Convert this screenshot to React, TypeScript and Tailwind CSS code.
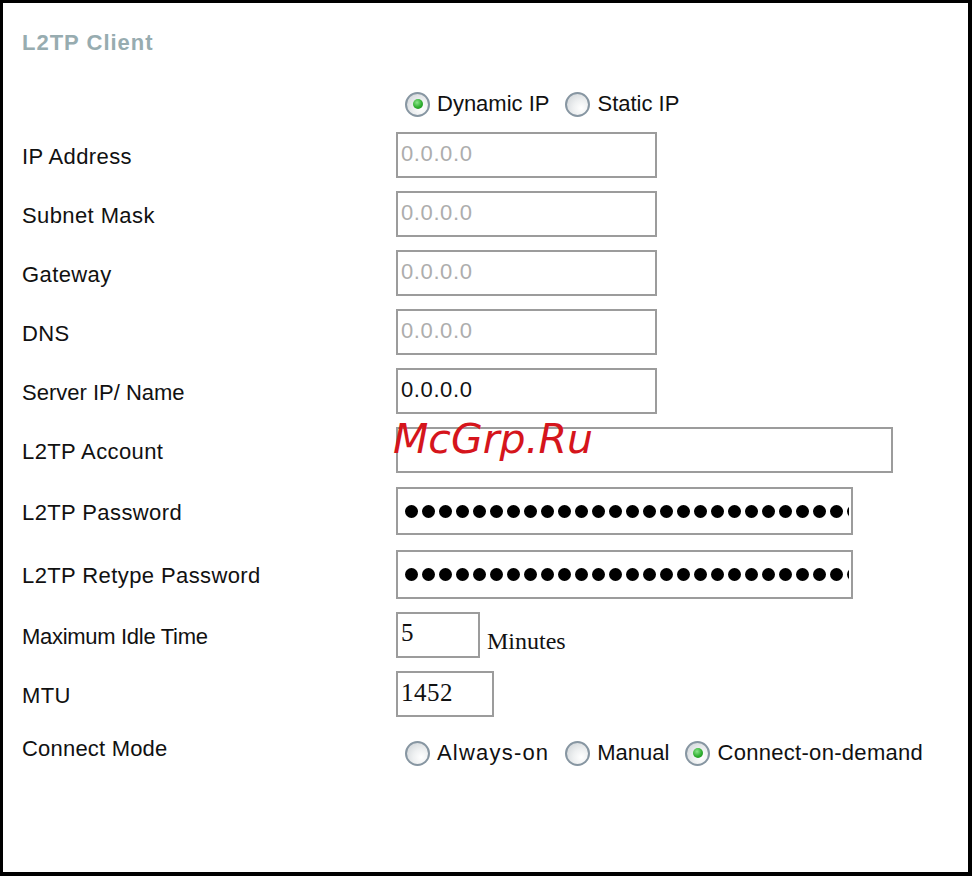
import React from 'react';

const sans = "font-['Liberation_Sans',Arial,sans-serif]";
const serif = "font-['Liberation_Serif','Times_New_Roman',serif]";

function Radio({ checked = false }: { checked?: boolean }) {
  return (
    <span className="flex h-[25px] w-[25px] shrink-0 items-center justify-center rounded-full border-2 border-[#8796a2] bg-[radial-gradient(circle_at_68%_68%,#ffffff_0%,#eef0f1_40%,#cbd0d4_100%)]">
      {checked && (
        <span className="h-[10px] w-[10px] rounded-full bg-[radial-gradient(circle_at_40%_35%,#8be58b_0%,#2fae2f_55%,#18871a_100%)]" />
      )}
    </span>
  );
}

function RadioOption({ label, checked, className = '' }: { label: string; checked?: boolean; className?: string }) {
  return (
    <label className="flex items-center gap-[7px]">
      <Radio checked={checked} />
      <span className={`text-[22px] leading-[26px] text-[#111] ${className}`}>{label}</span>
    </label>
  );
}

function Row({
  label,
  className,
  labelClass = 'tracking-[0.4px]',
  children,
}: {
  label: string;
  className: string;
  labelClass?: string;
  children: React.ReactNode;
}) {
  return (
    <div className={`flex items-center ${className}`}>
      <div className={`w-[374px] shrink-0 pt-[3px] text-[22px] leading-[26px] text-[#111] ${labelClass}`}>{label}</div>
      {children}
    </div>
  );
}

function TextBox({ value, width, muted }: { value: string; width: string; muted?: boolean }) {
  return (
    <div
      className={`flex h-full ${width} items-center border-2 border-[#9c9c9c] bg-white pl-[3px] pb-[3px] text-[22px] tracking-[0.6px] ${
        muted ? 'text-[#adadad]' : 'text-[#111]'
      }`}
    >
      {value}
    </div>
  );
}

function PasswordBox() {
  return (
    <div className="flex h-full w-[457px] items-center border-2 border-[#9c9c9c] bg-white pl-[7px] pr-[2px]">
      <div className="flex gap-[4px] overflow-hidden">
        {Array.from({ length: 28 }).map((_, i) => (
          <span key={i} className="h-[13px] w-[13px] shrink-0 rounded-full bg-black" />
        ))}
      </div>
    </div>
  );
}

export default function App() {
  const ipRows = [
    { label: 'IP Address', mt: 'mt-[15px]' },
    { label: 'Subnet Mask', mt: 'mt-[13px]' },
    { label: 'Gateway', mt: 'mt-[13px]' },
    { label: 'DNS', mt: 'mt-[13px]' },
  ];

  return (
    <div className={`relative h-[876px] w-[972px] border-t-[3px] border-r-[4px] border-b-[4px] border-l-[3px] border-black bg-white ${sans}`}>
      <div className="pl-[19px] pt-[27px]">
        {/* Title */}
        <h1 className="text-[22px] font-bold leading-[26px] tracking-[1px] text-[#97acb0]">L2TP Client</h1>

        {/* Address type */}
        <div className="mt-[35px] flex h-[26px] items-center gap-[16px] pl-[383px]">
          <RadioOption label="Dynamic IP" checked />
          <RadioOption label="Static IP" />
        </div>

        {ipRows.map((row) => (
          <Row key={row.label} label={row.label} className={`h-[46px] ${row.mt}`}>
            <TextBox value="0.0.0.0" width="w-[261px]" muted />
          </Row>
        ))}

        <Row label="Server IP/ Name" labelClass="tracking-[0px]" className="mt-[13px] h-[46px]">
          <TextBox value="0.0.0.0" width="w-[261px]" />
        </Row>

        <Row label="L2TP Account" className="mt-[13px] h-[46px]">
          <TextBox value="" width="w-[497px]" />
        </Row>

        <Row label="L2TP Password" className="mt-[14px] h-[48px]">
          <PasswordBox />
        </Row>

        <Row label="L2TP Retype Password" className="mt-[15px] h-[49px]">
          <PasswordBox />
        </Row>

        <Row label="Maximum Idle Time" labelClass="tracking-[-0.3px]" className="mt-[13px] h-[46px]">
          <div className={`flex h-full w-[84px] items-center border-2 border-[#9c9c9c] bg-white pl-[3px] pb-[4px] text-[25px] text-[#111] ${serif}`}>
            5
          </div>
          <span className={`ml-[7px] mt-[12px] text-[24px] text-[#111] ${serif}`}>Minutes</span>
        </Row>

        <Row label="MTU" className="mt-[13px] h-[46px]">
          <div className={`flex h-full w-[98px] items-center border-2 border-[#9c9c9c] bg-white pl-[3px] pb-[2px] text-[25px] tracking-[0.5px] text-[#111] ${serif}`}>
            1452
          </div>
        </Row>

        <div className="mt-[19px] flex items-start">
          <div className="w-[374px] shrink-0 text-[22px] leading-[26px] tracking-[0.2px] text-[#111]">Connect Mode</div>
          <div className="flex items-center gap-[16px] pl-[9px] pt-[4px]">
            <RadioOption label="Always-on" className="tracking-[1.2px]" />
            <RadioOption label="Manual" />
            <RadioOption label="Connect-on-demand" className="tracking-[0.3px]" checked />
          </div>
        </div>
      </div>

      {/* Watermark */}
      <div className="pointer-events-none absolute left-[390px] top-[416px] font-['DejaVu_Sans',sans-serif] text-[41px] italic leading-none text-[#d5151c]">
        McGrp.Ru
      </div>
    </div>
  );
}
